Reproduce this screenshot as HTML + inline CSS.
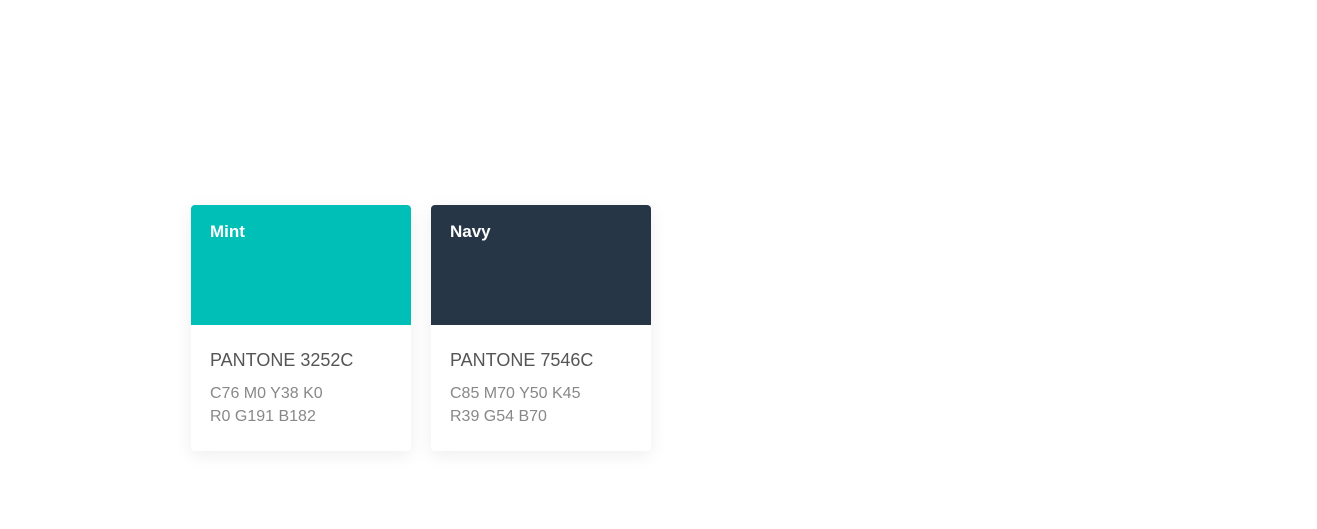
<!DOCTYPE html>
<html><head><meta charset="utf-8"><style>
body{margin:0;width:1317px;height:529px;background:#fff;font-family:"Liberation Sans",sans-serif;position:relative;overflow:hidden}
.card{position:absolute;top:205px;width:220px;height:246px;border-radius:4px;background:#fff;box-shadow:0 4px 18px rgba(0,0,0,0.07);overflow:hidden}
.sw{height:120px;position:relative}
.sw span{position:absolute;left:19px;top:17px;color:#fff;font-weight:bold;font-size:17px}
.p{position:absolute;left:19px;top:145px;font-size:18px;color:#555}
.c{position:absolute;left:19px;top:177px;font-size:16px;color:#888;line-height:23px}
</style></head><body>
<div class="card" style="left:191px"><div class="sw" style="background:#00bfb6"><span>Mint</span></div>
<div class="p">PANTONE 3252C</div><div class="c">C76 M0 Y38 K0<br>R0 G191 B182</div></div>
<div class="card" style="left:431px"><div class="sw" style="background:#273646"><span>Navy</span></div>
<div class="p">PANTONE 7546C</div><div class="c">C85 M70 Y50 K45<br>R39 G54 B70</div></div>
</body></html>
